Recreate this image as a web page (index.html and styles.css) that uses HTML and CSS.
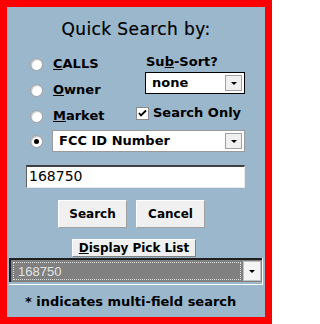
FILE: index.html
```html
<!DOCTYPE html>
<html>
<head>
<meta charset="utf-8">
<link rel="stylesheet" href="styles.css">
</head>
<body>
<div class="frame">
  <div class="title">Quick Search by:</div>
  <div class="main">
    <div class="top">
      <div class="left">
        <div class="radio-row"><span class="radio"></span><span class="lbl"><u>C</u>ALLS</span></div>
        <div class="radio-row"><span class="radio"></span><span class="lbl"><u>O</u>wner</span></div>
        <div class="radio-row"><span class="radio"></span><span class="lbl"><u>M</u>arket</span></div>
      </div>
      <div class="right">
        <div class="subsort">Su<u>b</u>-Sort?</div>
        <div class="select sel-none"><span class="sel-text">none</span><span class="drop"><span class="tri"></span></span></div>
        <div class="check-row">
          <span class="check"><svg width="11" height="11" viewBox="0 0 11 11"><path d="M2 5 L4 7.5 L9 2.5" fill="none" stroke="#000" stroke-width="1.8"/></svg></span>
          <span class="lbl">Search Only</span>
        </div>
      </div>
    </div>
    <div class="radio-row fcc">
      <span class="radio on"></span>
      <div class="select sel-fcc"><span class="sel-text">FCC ID Number</span><span class="drop"><span class="tri"></span></span></div>
    </div>
    <div class="input">168750</div>
    <div class="buttons">
      <div class="btn">Search</div>
      <div class="btn">Cancel</div>
    </div>
    <div class="pick-btn"><u>D</u>isplay Pick List</div>
  </div>
  <div class="gray-wrap">
    <div class="gray-select">
      <div class="gray-text"><span>168750</span></div>
      <span class="drop gdrop"><span class="tri"></span></span>
    </div>
  </div>
  <div class="footer">* indicates multi-field search</div>
</div>
</body>
</html>
```
FILE: styles.css
```css
html, body {
  margin: 0;
  padding: 0;
}
.frame {
  width: 272px;
  height: 324px;
  box-sizing: border-box;
  border: 7px solid #ff0000;
  background: #9ab7cb;
  font-family: "DejaVu Sans", sans-serif;
  color: #000;
  overflow: hidden;
}
.title {
  margin-top: 13px;
  height: 19px;
  line-height: 19px;
  font-size: 17px;
  letter-spacing: 0.4px;
  text-align: center;
  -webkit-text-stroke: 0.2px #000;
}
.main {
  margin-left: 19px;
  width: 219px;
}
.top {
  display: flex;
  margin-top: 12px;
}
.left {
  width: 110px;
  display: flex;
  flex-direction: column;
}
.radio-row {
  display: flex;
  align-items: center;
  height: 26px;
  padding-left: 4px;
}
.radio {
  width: 13px;
  height: 13px;
  box-sizing: border-box;
  border-radius: 50%;
  background: #fff;
  border: 1px solid #a0a0a0;
  box-shadow: inset 1px 1px 1px #c0c0c0;
  position: relative;
  flex: none;
}
.radio.on::after {
  content: "";
  position: absolute;
  left: 3px;
  top: 3px;
  width: 5px;
  height: 5px;
  border-radius: 50%;
  background: #000;
}
.lbl {
  font-size: 13px;
  font-weight: bold;
  margin-left: 10px;
  line-height: 16px;
}
.right {
  width: 109px;
  display: flex;
  flex-direction: column;
}
.subsort {
  margin-top: 2px;
  margin-left: 10px;
  font-size: 13px;
  font-weight: bold;
  line-height: 18px;
}
.select {
  display: flex;
  align-items: center;
  height: 22px;
  box-sizing: border-box;
  background: #fff;
  position: relative;
}
.sel-none {
  margin-top: 1px;
  margin-left: 9px;
  width: 100px;
  border: 1px solid #000;
}
.sel-text {
  flex: 1;
  font-size: 13px;
  font-weight: bold;
  padding-left: 6px;
  line-height: 16px;
}
.drop {
  width: 17px;
  height: 16px;
  box-sizing: border-box;
  margin-right: 2px;
  background: #f0f0f0;
  border: 1px solid #a0a0a0;
  display: flex;
  align-items: center;
  justify-content: center;
  flex: none;
}
.tri {
  width: 0;
  height: 0;
  border-left: 3px solid transparent;
  border-right: 3px solid transparent;
  border-top: 3px solid #000;
}
.check-row {
  display: flex;
  align-items: center;
  margin-top: 9px;
  height: 20px;
}
.check {
  width: 13px;
  height: 13px;
  box-sizing: border-box;
  background: #fff;
  border: 1px solid #8a8a8a;
  display: flex;
  align-items: center;
  justify-content: center;
  flex: none;
}
.check-row .lbl {
  margin-left: 4px;
}
.fcc {
  margin-top: 1px;
  height: 22px;
}
.sel-fcc {
  margin-left: 9px;
  width: 193px;
  border: 1px solid #9a9a9a;
}
.sel-fcc .sel-text {
  padding-left: 6px;
}
.input {
  margin-top: 13px;
  height: 23px;
  box-sizing: border-box;
  background: #fff;
  border-top: 2px solid #404040;
  border-left: 1px solid #606060;
  border-right: 1px solid #e8e8e8;
  border-bottom: 1px solid #e8e8e8;
  font-size: 14px;
  line-height: 19px;
  padding-left: 2px;
}
.buttons {
  display: flex;
  gap: 9px;
  margin-top: 12px;
  padding-left: 32px;
}
.btn {
  width: 69px;
  height: 28px;
  box-sizing: border-box;
  background: #f0f0f0;
  border-top: 1px solid #fff;
  border-left: 1px solid #fff;
  border-right: 1px solid #a0a0a0;
  border-bottom: 1px solid #a0a0a0;
  font-size: 12px;
  font-weight: bold;
  text-align: center;
  line-height: 26px;
}
.pick-btn {
  margin-top: 11px;
  margin-left: 46px;
  width: 124px;
  height: 18px;
  box-sizing: border-box;
  background: #f0f0f0;
  border-top: 1px solid #fff;
  border-left: 1px solid #fff;
  border-right: 1px solid #808080;
  border-bottom: 1px solid #808080;
  font-size: 12px;
  font-weight: bold;
  text-align: center;
  line-height: 16px;
}
.gray-wrap {
  margin: 1px 2px 0 2px;
  width: 254px;
  box-sizing: border-box;
  border-right: 1px solid #fff;
  border-bottom: 1px solid #fff;
  padding-bottom: 2px;
}
.gray-select {
  display: flex;
  align-items: center;
  height: 24px;
  box-sizing: border-box;
  background: #808080;
  border-top: 2px solid #202020;
  border-left: 2px solid #202020;
}
.gray-text {
  flex: 1;
  height: 18px;
  margin: 0 2px;
  box-sizing: border-box;
  border: 1px dotted #e0e0e0;
  display: flex;
  align-items: center;
  font-family: "Liberation Sans", sans-serif;
  font-size: 13px;
  color: #e4e4e4;
  padding-left: 4px;
}
.gdrop {
  width: 18px;
  height: 20px;
  margin-right: 1px;
  background: #f4f4f4;
  border: 1px solid #c0c0c0;
}
.footer {
  margin-top: 9px;
  padding-left: 18px;
  font-size: 13px;
  font-weight: bold;
  line-height: 16px;
}
```
